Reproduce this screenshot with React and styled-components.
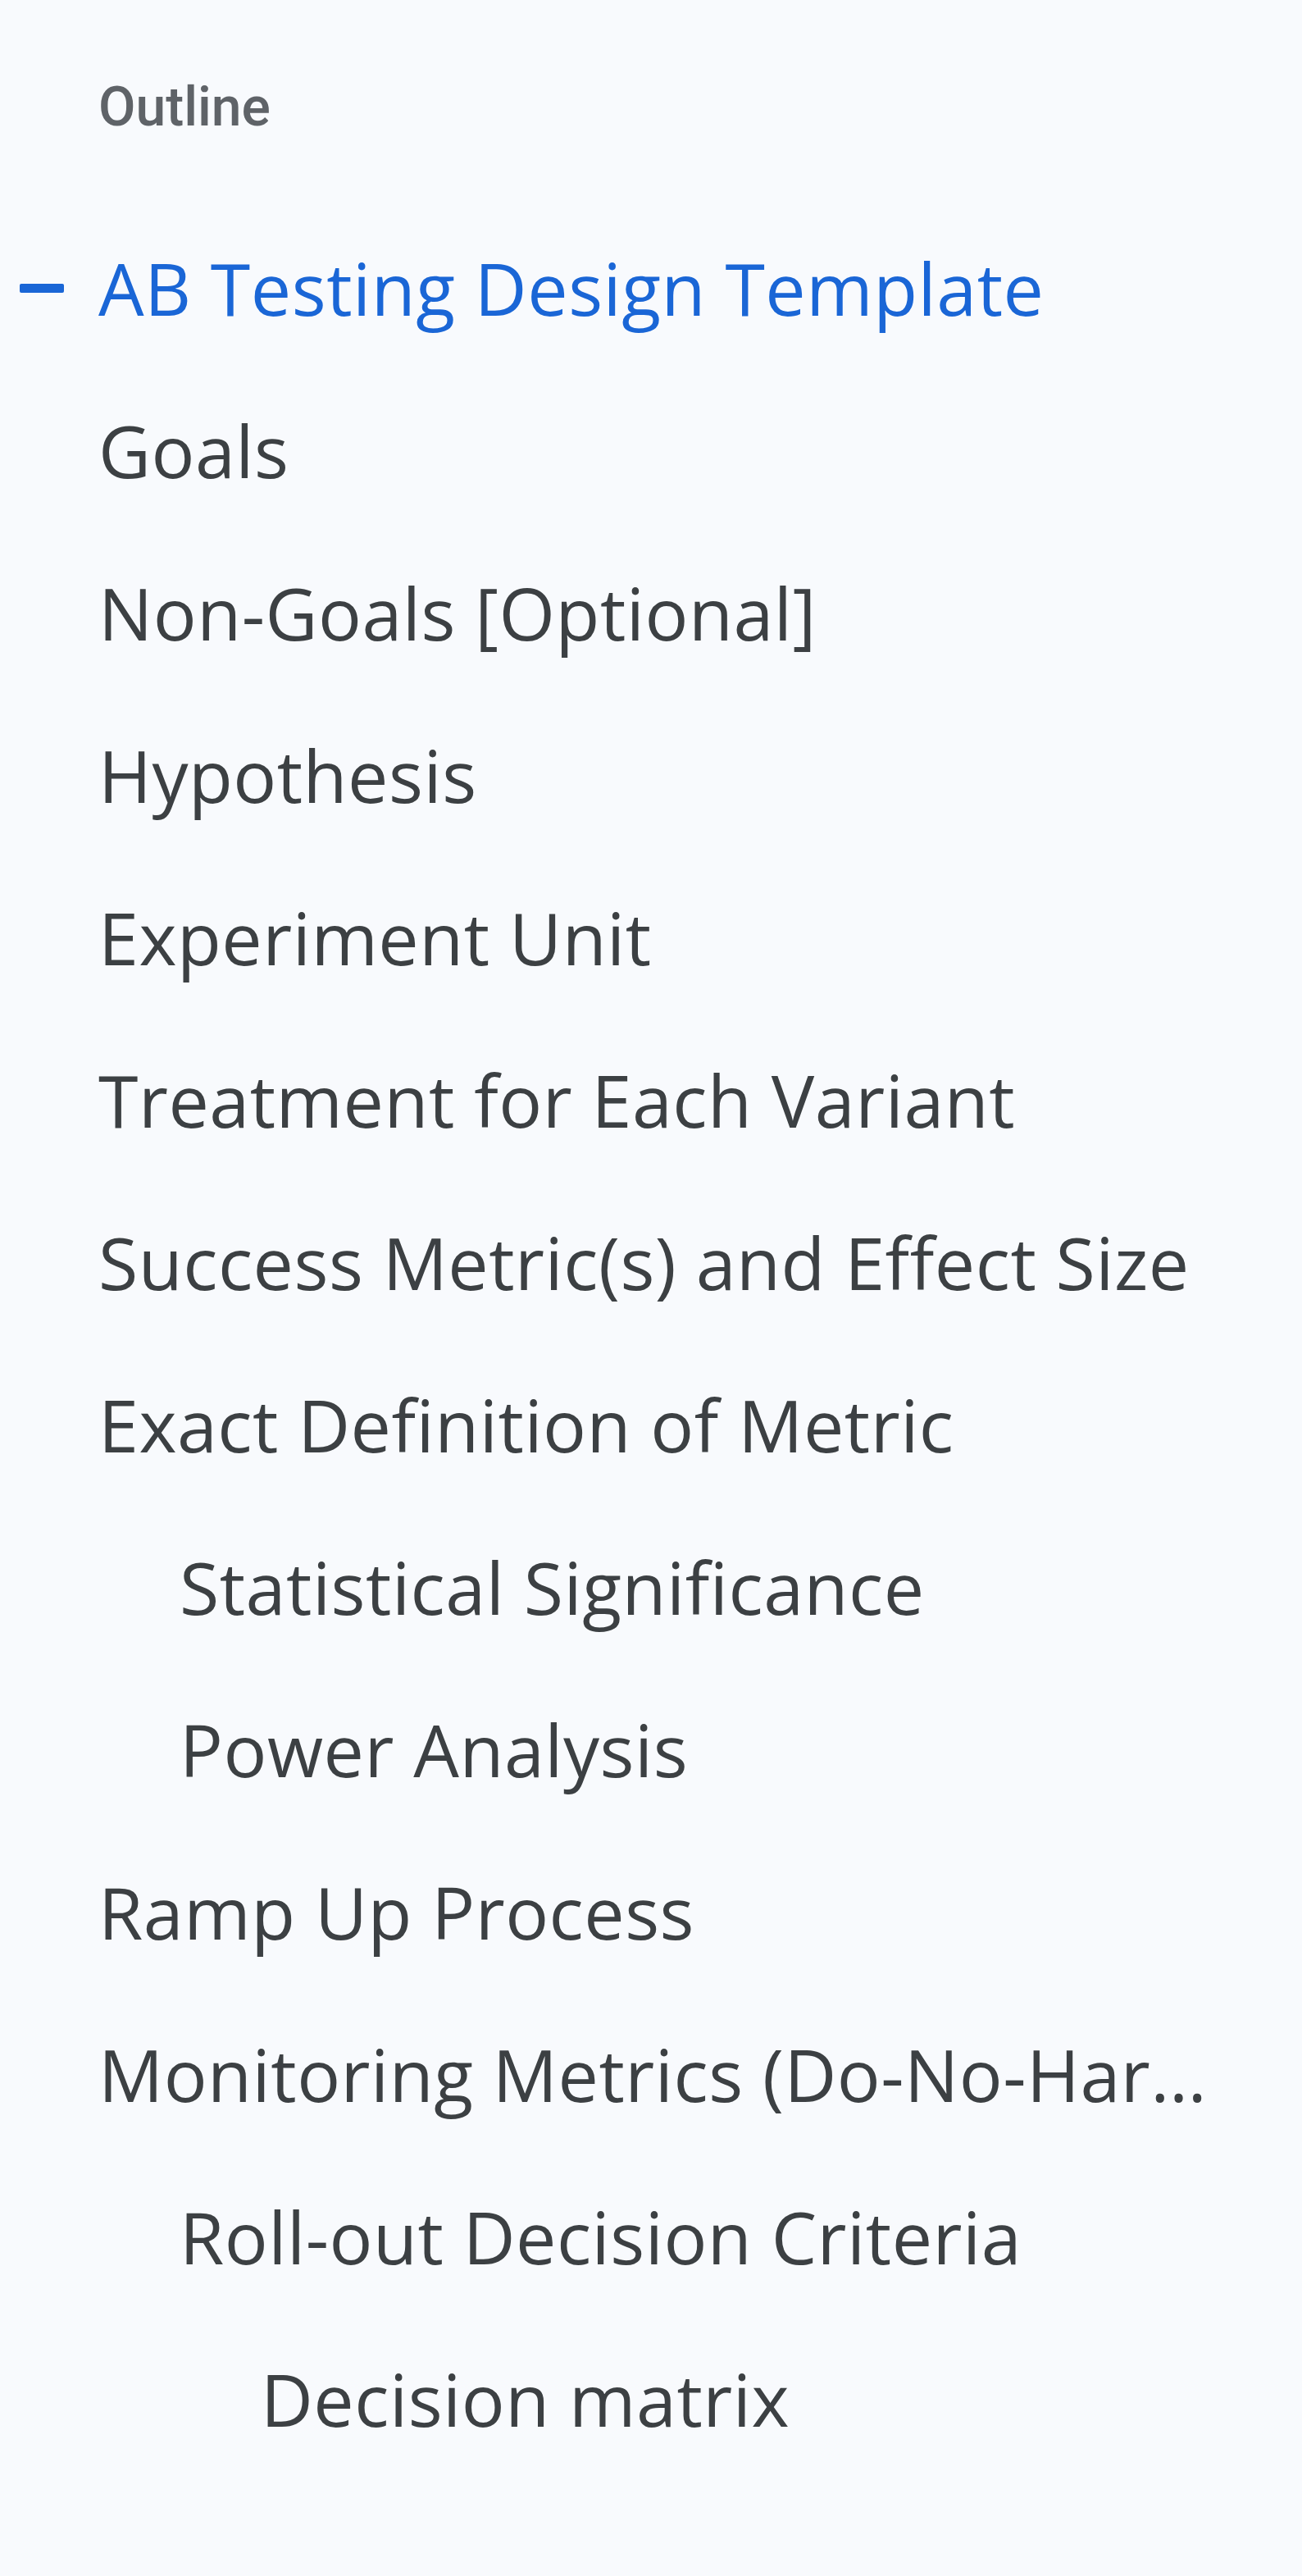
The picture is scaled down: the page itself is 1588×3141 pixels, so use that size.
import React from 'react';
import styled, { createGlobalStyle } from 'styled-components';

const GlobalStyle = createGlobalStyle`
  html, body {
    margin: 0;
    padding: 0;
    background: #f8fafd;
  }
  body {
    font-family: "Open Sans", "Noto Sans", sans-serif;
    -webkit-font-smoothing: antialiased;
  }
`;

const Panel = styled.nav`
  width: 1588px;
  min-height: 3141px;
  box-sizing: border-box;
  background: #f8fafd;
  padding-top: 88px;
`;

const Title = styled.div`
  height: 84px;
  display: flex;
  align-items: center;
  padding-left: 120px;
  font-family: Roboto, "Liberation Sans", sans-serif;
  font-size: 66px;
  font-weight: 500;
  color: #5f6368;
  margin-bottom: 80px;
`;

const List = styled.ul`
  list-style: none;
  margin: 0;
  padding: 0;
`;

const Row = styled.li`
  height: 198px;
  display: flex;
  align-items: center;
  box-sizing: border-box;
  padding-left: 24px;
  padding-right: 92px;
  color: ${p => (p.$active ? '#1a66d6' : '#3c4043')};
`;

const Marker = styled.span`
  flex: none;
  width: 54px;
  height: 11px;
  border-radius: 2px;
  margin-right: 42px;
  background: ${p => (p.$show ? '#1a66d6' : 'transparent')};
`;

const Label = styled.span`
  flex: 1;
  min-width: 0;
  padding-left: ${p => p.$level * 99}px;
  font-size: 88px;
  font-weight: 500;
  white-space: nowrap;
  overflow: hidden;
  text-overflow: ellipsis;
  letter-spacing: 0.5px;
`;

const items = [
  { text: 'AB Testing Design Template', level: 0, active: true },
  { text: 'Goals', level: 0 },
  { text: 'Non-Goals [Optional]', level: 0 },
  { text: 'Hypothesis', level: 0 },
  { text: 'Experiment Unit', level: 0 },
  { text: 'Treatment for Each Variant', level: 0 },
  { text: 'Success Metric(s) and Effect Size', level: 0 },
  { text: 'Exact Definition of Metric', level: 0 },
  { text: 'Statistical Significance', level: 1 },
  { text: 'Power Analysis', level: 1 },
  { text: 'Ramp Up Process', level: 0 },
  { text: 'Monitoring Metrics (Do-No-Harm Metrics)', level: 0 },
  { text: 'Roll-out Decision Criteria', level: 1 },
  { text: 'Decision matrix', level: 2 },
];

export default function App() {
  return (
    <>
      <GlobalStyle />
      <Panel>
        <Title>Outline</Title>
        <List>
          {items.map(item => (
            <Row key={item.text} $active={item.active}>
              <Marker $show={item.active} />
              <Label $level={item.level}>{item.text}</Label>
            </Row>
          ))}
        </List>
      </Panel>
    </>
  );
}
